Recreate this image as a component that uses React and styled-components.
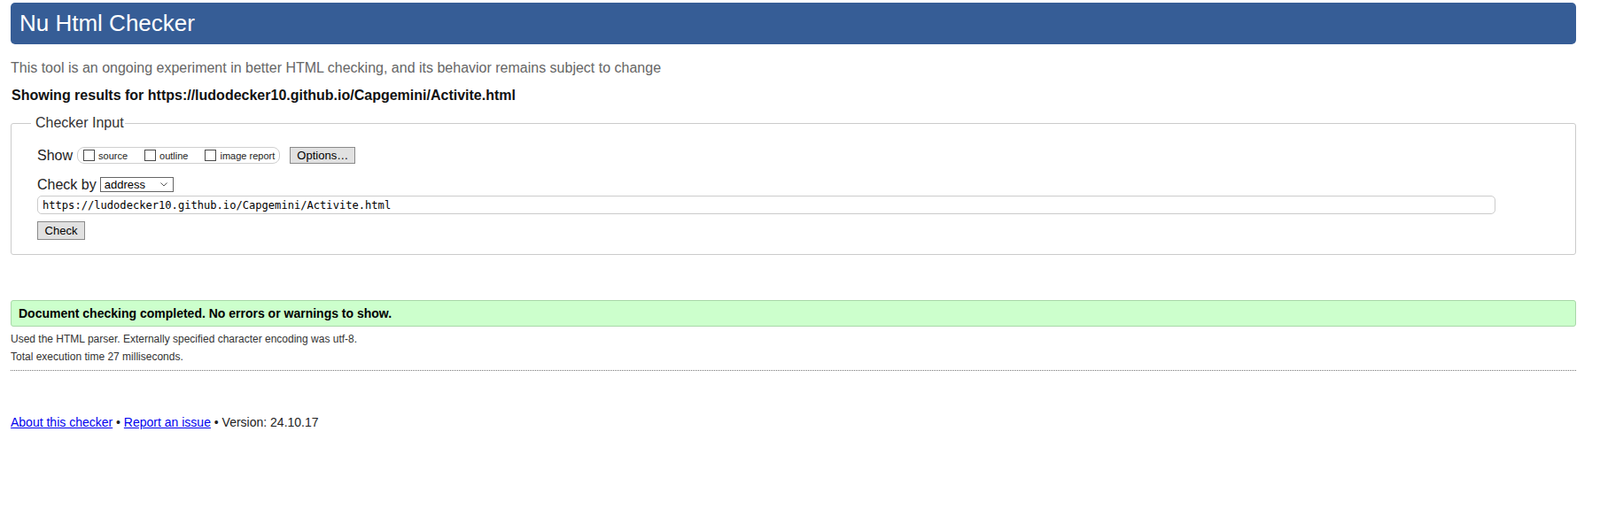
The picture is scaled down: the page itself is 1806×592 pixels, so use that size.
import styled, { createGlobalStyle } from 'styled-components';

const GlobalStyle = createGlobalStyle`
  body {
    margin: 0;
    background: #fff;
    color: #222;
    font-family: "Liberation Sans", Arial, sans-serif;
  }
`;

const Page = styled.div`
  padding: 3px 27px 0 12px;
`;

const Header = styled.h1`
  margin: 0;
  height: 47px;
  padding: 0 10px;

  border-radius: 5px;
  background: #365d96;

  color: #fff;
  font-size: 26px;
  font-weight: normal;
  line-height: 46px;
`;

const Intro = styled.p`
  margin: 17px 0 0;

  color: #666;
  font-size: 16px;
  line-height: 20px;
`;

const ResultsFor = styled.p`
  margin: 11px 0 0;
  padding-left: 1px;

  color: #111;
  font-size: 16px;
  font-weight: bold;
  line-height: 20px;
`;

const InputFieldset = styled.fieldset`
  margin: 11px 0 0;
  padding: 17px 29px 16px;

  border: 1px solid #cbcbcb;
  border-radius: 3px;
`;

const Legend = styled.legend`
  margin-left: -7px;
  padding: 0 1px 0 5px;

  color: #333;
  font-size: 16px;
  line-height: 20px;
`;

const FormRow = styled.div`
  display: flex;
  align-items: center;
  height: 19px;
  margin-top: ${(p) => p.$gap || 0}px;
`;

const RowLabel = styled.span`
  margin-right: ${(p) => p.$space}px;

  color: #222;
  font-size: 16px;
  line-height: 19px;
`;

const CheckGroup = styled.div`
  display: inline-flex;
  align-items: center;
  gap: 19px;
  box-sizing: border-box;
  height: 19px;
  padding: 0 5px 0 6px;

  border: 1px solid #cfcfcf;
  border-radius: 8px;
`;

const Option = styled.label`
  display: inline-flex;
  align-items: flex-end;
  gap: 4px;

  color: #222;
  font-size: 11px;
  line-height: 11px;
`;

const Box = styled.input`
  appearance: none;
  width: 13px;
  height: 13px;
  margin: 0;

  border: 1px solid #4a4a4a;
  border-radius: 0;
  background: #fff;
`;

const GreyButton = styled.button`
  display: block;
  box-sizing: border-box;
  width: ${(p) => p.$width}px;
  height: ${(p) => p.$height}px;
  margin: ${(p) => p.$margin || 0};
  padding: 0;

  border: 1px solid #8a8a8a;
  border-radius: 0;
  background: #e1e1e1;

  color: #000;
  font-family: "Liberation Sans", Arial, sans-serif;
  font-size: 13px;
`;

const SelectWrap = styled.div`
  position: relative;
  margin-left: 4px;
`;

const Select = styled.select`
  appearance: none;
  display: block;
  box-sizing: border-box;
  width: 83px;
  height: 17px;
  padding: 0 0 0 4px;

  border: 1px solid #666;
  border-radius: 0;
  background: #fff;

  color: #000;
  font-family: "Liberation Sans", Arial, sans-serif;
  font-size: 13px;
`;

const Chevron = styled.svg`
  position: absolute;
  top: 6px;
  right: 7px;
  pointer-events: none;
`;

const UrlInput = styled.input`
  display: block;
  box-sizing: border-box;
  width: 1646px;
  height: 21px;
  margin: 3px 0 0;
  padding: 0 5px;

  border: 1px solid #cbcbcb;
  border-radius: 5px;

  color: #000;
  font-family: "DejaVu Sans Mono", "Liberation Mono", monospace;
  font-size: 12.1px;
`;

const SuccessBox = styled.div`
  box-sizing: border-box;
  height: 30px;
  margin-top: 51px;
  padding: 0 8px;

  border: 1px solid #a8d8a8;
  border-radius: 3px;
  background: #ccffcc;

  color: #000;
  font-size: 14px;
  font-weight: bold;
  line-height: 28px;
`;

const Detail = styled.p`
  margin: ${(p) => (p.$first ? '4px' : '0')} 0 0;

  color: #333;
  font-size: 12px;
  line-height: 20px;
`;

const Rule = styled.hr`
  height: 0;
  margin: 5px 0 0;

  border: 0;
  border-top: 1px dotted #777;
`;

const Footer = styled.p`
  margin: 48px 0 0;

  color: #222;
  font-size: 14px;
  line-height: 20px;

  a {
    color: #0000ee;
  }
`;

const URL = 'https://ludodecker10.github.io/Capgemini/Activite.html';

export default function App() {
  return (
    <>
      <GlobalStyle />
      <Page>
        <Header>Nu Html Checker</Header>
        <Intro>
          This tool is an ongoing experiment in better HTML checking, and its behavior remains subject to change
        </Intro>
        <ResultsFor>Showing results for {URL}</ResultsFor>

        <InputFieldset>
          <Legend>Checker Input</Legend>

          <FormRow>
            <RowLabel $space={5}>Show</RowLabel>
            <CheckGroup>
              <Option>
                <Box type="checkbox" />
                source
              </Option>
              <Option>
                <Box type="checkbox" />
                outline
              </Option>
              <Option>
                <Box type="checkbox" />
                image report
              </Option>
            </CheckGroup>
            <GreyButton type="button" $width={74} $height={19} $margin="0 0 0 11px">
              Options…
            </GreyButton>
          </FormRow>

          <FormRow $gap={14}>
            <RowLabel $space={0}>Check by</RowLabel>
            <SelectWrap>
              <Select defaultValue="address">
                <option value="address">address</option>
                <option value="file">file upload</option>
                <option value="text">text input</option>
              </Select>
              <Chevron width="8" height="5" viewBox="0 0 8 5">
                <path d="M0.5 0.5 L4 4 L7.5 0.5" fill="none" stroke="#555" strokeWidth="1" />
              </Chevron>
            </SelectWrap>
          </FormRow>

          <UrlInput type="url" defaultValue={URL} />
          <GreyButton type="button" $width={54} $height={21} $margin="8px 0 0">
            Check
          </GreyButton>
        </InputFieldset>

        <SuccessBox>Document checking completed. No errors or warnings to show.</SuccessBox>
        <Detail $first>Used the HTML parser. Externally specified character encoding was utf-8.</Detail>
        <Detail>Total execution time 27 milliseconds.</Detail>
        <Rule />

        <Footer>
          <a href="#about">About this checker</a> • <a href="#issue">Report an issue</a> • Version: 24.10.17
        </Footer>
      </Page>
    </>
  );
}
